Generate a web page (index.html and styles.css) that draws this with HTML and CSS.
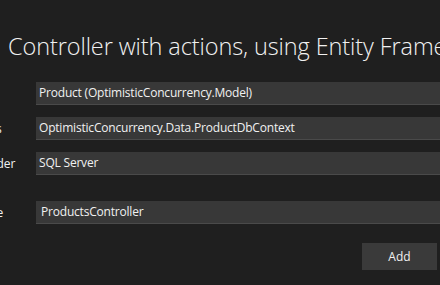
FILE: index.html
```html
<!DOCTYPE html>
<html lang="en">

<head>
    <meta charset="UTF-8">
    <title>Add Controller</title>
    <link rel="stylesheet" href="styles.css">
</head>

<body>
    <div class="dialog">
        <h1 class="title">Controller with actions, using Entity Framework</h1>

        <div class="form">
            <label class="field-label">Model class</label>
            <div class="combo">Product (OptimisticConcurrency.Model)</div>

            <label class="field-label">DbContext class</label>
            <div class="combo">OptimisticConcurrency.Data.ProductDbContext</div>

            <label class="field-label">Database provider</label>
            <div class="combo">SQL Server</div>

            <label class="field-label name-label">Controller name</label>
            <div class="textbox name-box">ProductsController</div>
        </div>

        <div class="actions">
            <button class="add-button">Add</button>
        </div>
    </div>
</body>

</html>
```

FILE: styles.css
```css
body {
    margin: 0;
    background: #1f1f1f;
    color: #f1f1f1;
    font-family: "Open Sans", "Noto Sans", sans-serif;
    overflow: hidden;
    width: 440px;
    height: 285px;
}

.dialog {
    padding-top: 30px;
}

.title {
    margin: 0 0 0 8px;
    font-size: 23.5px;
    font-weight: 300;
    line-height: 32px;
    letter-spacing: -0.1px;
    white-space: nowrap;
    color: #f1f1f1;
}

.form {
    display: grid;
    grid-template-columns: 124px 450px;
    row-gap: 12px;
    align-items: center;
    margin: 20px 0 0 -88px;
    font-size: 12px;
}

.field-label {
    color: #f1f1f1;
    white-space: nowrap;
}

.combo,
.textbox {
    height: 22px;
    line-height: 22px;
    padding-left: 3px;
    background: #383838;
    border-bottom: 1px solid #4a4a4a;
    letter-spacing: -0.2px;
    white-space: nowrap;
}

.textbox {
    padding-left: 5px;
}

.name-label,
.name-box {
    margin-top: 14px;
}

.actions {
    display: flex;
    justify-content: flex-end;
    padding-right: 3px;
    margin-top: 19px;
}

.add-button {
    width: 75px;
    height: 27px;
    border: none;
    background: #3a3a3a;
    color: #f1f1f1;
    font-family: "Open Sans", "Noto Sans", sans-serif;
    font-size: 12px;
}
```
